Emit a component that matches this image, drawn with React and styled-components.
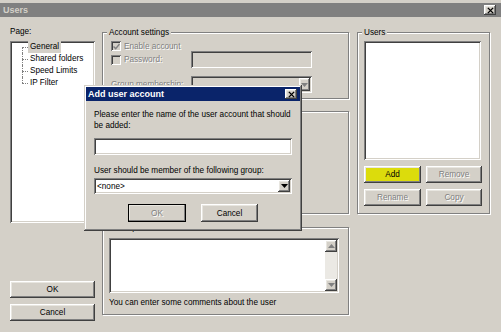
import styled, { createGlobalStyle } from 'styled-components';

const Global = createGlobalStyle`
    html, body {
        margin: 0;
        padding: 0;
        background: #d4d0c8;
    }
`;

const raised = `
    box-shadow: inset -1px -1px 0 #404040, inset 1px 1px 0 #fff, inset -2px -2px 0 #808080, inset 2px 2px 0 #e8e6e0;
`;

const sunken = `
    box-shadow: inset 1px 1px 0 #808080, inset -1px -1px 0 #fff, inset 2px 2px 0 #404040, inset -2px -2px 0 #d4d0c8;
`;

const Window = styled.div`
    width: 501px;
    height: 332px;
    position: relative;
    overflow: hidden;
    background: #d4d0c8;
    font-family: "Liberation Sans", Arial, sans-serif;
    font-size: 8.2px;
    color: #000;
    box-sizing: border-box;
    padding-top: 3px;
`;

const TitleBar = styled.div`
    height: 14px;
    background: ${(p) => (p.active ? '#0a246a' : '#808080')};
    display: flex;
    align-items: center;
    justify-content: space-between;
    padding: ${(p) => (p.active ? '0 3px 0 2px' : '0 5px 0 3px')};
`;

const TitleText = styled.span`
    font-weight: bold;
    font-size: 9px;
    color: ${(p) => (p.active ? '#fff' : '#d4d0c8')};
`;

const CloseBox = styled.div`
    width: 12px;
    height: 10px;
    background: #d4d0c8;
    ${raised}
    display: flex;
    align-items: center;
    justify-content: center;
`;

const Body = styled.div`
    display: flex;
    gap: 7px;
    padding: 10px 11px 11px 10px;
    height: 315px;
    box-sizing: border-box;
`;

const LeftCol = styled.div`
    width: 85px;
    display: flex;
    flex-direction: column;
`;

const MidCol = styled.div`
    width: 247px;
    display: flex;
    flex-direction: column;
`;

const RightCol = styled.div`
    width: 133px;
    margin-left: 1px;
    display: flex;
    flex-direction: column;
`;

const Label = styled.div`
    line-height: 10px;
    height: 10px;
    color: ${(p) => (p.disabled ? '#808080' : '#000')};
    text-shadow: ${(p) => (p.disabled ? '1px 1px 0 #fff' : 'none')};
    white-space: nowrap;
    margin-top: ${(p) => p.mt || 0}px;
`;

const Tree = styled.div`
    margin-top: 4px;
    height: 182px;
    background: #fff;
    ${sunken}
`;

const TreeItem = styled.div`
    position: relative;
    height: 12px;
    line-height: 12px;
    padding-left: 18px;
    &::before {
        content: '';
        position: absolute;
        left: 12px;
        top: 6px;
        width: 6px;
        border-top: 1px dotted #808080;
    }
    &::after {
        content: '';
        position: absolute;
        left: 12px;
        top: ${(p) => (p.first ? '6px' : '0')};
        height: ${(p) => (p.first || p.last ? '6px' : '12px')};
        border-left: 1px dotted #808080;
    }
`;

const TreeText = styled.span`
    display: inline-block;
    padding: 0 2px;
    background: ${(p) => (p.selected ? '#d4d0c8' : 'transparent')};
`;

const Button = styled.div`
    height: ${(p) => p.h || 17}px;
    width: ${(p) => (p.w ? `${p.w}px` : 'auto')};
    box-sizing: border-box;
    display: flex;
    align-items: center;
    justify-content: center;
    background: ${(p) => p.bg || '#d4d0c8'};
    ${raised}
    color: ${(p) => (p.disabled ? '#808080' : '#000')};
    text-shadow: ${(p) => (p.disabled ? '1px 1px 0 #fff' : 'none')};
    outline: ${(p) => (p.isDefault ? '1px solid #000' : 'none')};
    outline-offset: -1px;
    margin-top: ${(p) => p.mt || 0}px;
`;

const Group = styled.div`
    position: relative;
    height: ${(p) => p.h}px;
    margin-top: ${(p) => p.mt || 0}px;
    box-sizing: border-box;
    border: 1px solid #808080;
    box-shadow: inset 1px 1px 0 #fff, 1px 1px 0 #fff;
    padding: ${(p) => p.pad || '0'};
`;

const Legend = styled.span`
    position: absolute;
    top: -6px;
    left: 4px;
    padding: 0 2px;
    line-height: 11px;
    background: #d4d0c8;
`;

const FormRow = styled.div`
    display: flex;
    align-items: center;
    height: ${(p) => p.h}px;
    margin-top: ${(p) => p.mt || 0}px;
`;

const CheckLabel = styled.div`
    width: 80px;
    display: flex;
    align-items: center;
    gap: 3px;
    color: #808080;
    text-shadow: 1px 1px 0 #fff;
    white-space: nowrap;
`;

const CheckBox = styled.div`
    width: 10px;
    height: 10px;
    flex: none;
    background: #d4d0c8;
    ${sunken}
    display: flex;
    align-items: center;
    justify-content: center;
`;

const Field = styled.div`
    width: ${(p) => p.w}px;
    height: ${(p) => p.h}px;
    box-sizing: border-box;
    background: ${(p) => (p.disabled ? '#d4d0c8' : '#fff')};
    ${sunken}
    display: flex;
    align-items: center;
    justify-content: space-between;
    padding: 2px;
    margin-top: ${(p) => p.mt || 0}px;
`;

const FieldText = styled.span`
    padding-left: 1px;
    white-space: nowrap;
`;

const ArrowBtn = styled.div`
    width: ${(p) => p.w || 12}px;
    height: ${(p) => p.h || 12}px;
    flex: none;
    box-sizing: border-box;
    background: #d4d0c8;
    ${raised}
    display: flex;
    align-items: center;
    justify-content: center;
`;

const ListBox = styled.div`
    height: 119px;
    background: #fff;
    ${sunken}
`;

const ButtonGrid = styled.div`
    display: grid;
    grid-template-columns: 57px 56px;
    column-gap: 5px;
    row-gap: 6px;
    margin-top: 6px;
`;

const TextArea = styled.div`
    height: 55px;
    width: 230px;
    box-sizing: border-box;
    background: #fff;
    ${sunken}
    display: flex;
    justify-content: flex-end;
    padding: 2px;
`;

const ScrollTrack = styled.div`
    width: 12px;
    background: #ebe9e4;
    display: flex;
    flex-direction: column;
    justify-content: space-between;
`;

const Dialog = styled.div`
    position: absolute;
    left: 84px;
    top: 85px;
    width: 218px;
    height: 146px;
    box-sizing: border-box;
    padding: 2px;
    background: #d4d0c8;
    box-shadow: inset -1px -1px 0 #404040, inset 1px 1px 0 #d4d0c8, inset -2px -2px 0 #808080, inset 2px 2px 0 #fff;
`;

const DialogBody = styled.div`
    padding: 9px 8px 0 8px;
`;

const Paragraph = styled.div`
    line-height: 10.5px;
`;

const ButtonRow = styled.div`
    display: flex;
    justify-content: center;
    gap: 15px;
    margin-top: 10px;
`;

const XMark = ({ size = 7 }) => (
    <svg width={size} height={size} viewBox="0 0 8 7">
        <path d="M1 0.5 L7 6.5 M7 0.5 L1 6.5" stroke="#000" strokeWidth="1.6" />
    </svg>
);

const Tri = ({ up, color = '#000' }) => (
    <svg width="7" height="4" viewBox="0 0 7 4">
        <path d={up ? 'M0 4 L3.5 0 L7 4 Z' : 'M0 0 L7 0 L3.5 4 Z'} fill={color} />
    </svg>
);

const Check = () => (
    <svg width="7" height="7" viewBox="0 0 7 7">
        <path d="M0.5 3.5 L2.7 5.6 L6.5 1" stroke="#808080" strokeWidth="1.4" fill="none" />
    </svg>
);

export default function App() {
    return (
        <Window>
            <Global />
            <TitleBar>
                <TitleText>Users</TitleText>
                <CloseBox><XMark /></CloseBox>
            </TitleBar>
            <Body>
                <LeftCol>
                    <Label>Page:</Label>
                    <Tree>
                        <TreeItem first><TreeText selected>General</TreeText></TreeItem>
                        <TreeItem><TreeText>Shared folders</TreeText></TreeItem>
                        <TreeItem><TreeText>Speed Limits</TreeText></TreeItem>
                        <TreeItem last><TreeText>IP Filter</TreeText></TreeItem>
                    </Tree>
                    <Button mt={58}>OK</Button>
                    <Button mt={6}>Cancel</Button>
                </LeftCol>

                <MidCol>
                    <Group h={67} mt={5} pad="8px 0 0 8px">
                        <Legend>Account settings</Legend>
                        <FormRow h={10}>
                            <CheckLabel><CheckBox><Check /></CheckBox>Enable account</CheckLabel>
                        </FormRow>
                        <FormRow h={17}>
                            <CheckLabel><CheckBox />Password:</CheckLabel>
                            <Field w={121} h={17} disabled />
                        </FormRow>
                        <FormRow h={17} mt={8}>
                            <CheckLabel>Group membership:</CheckLabel>
                            <Field w={121} h={17} disabled>
                                <span />
                                <ArrowBtn w={11} h={13}><Tri color="#808080" /></ArrowBtn>
                            </Field>
                        </FormRow>
                    </Group>
                    <Group h={103} mt={12} />
                    <Group h={88} mt={13} pad="10px 0 0 6px">
                        <Legend>Description</Legend>
                        <TextArea>
                            <ScrollTrack>
                                <ArrowBtn><Tri up color="#808080" /></ArrowBtn>
                                <ArrowBtn><Tri color="#808080" /></ArrowBtn>
                            </ScrollTrack>
                        </TextArea>
                        <Label mt={5}>You can enter some comments about the user</Label>
                    </Group>
                </MidCol>

                <RightCol>
                    <Group h={182} mt={5} pad="8px 8px 0 6px">
                        <Legend>Users</Legend>
                        <ListBox />
                        <ButtonGrid>
                            <Button bg="#dcdc0c">Add</Button>
                            <Button disabled>Remove</Button>
                            <Button disabled>Rename</Button>
                            <Button disabled>Copy</Button>
                        </ButtonGrid>
                    </Group>
                </RightCol>
            </Body>

            <Dialog>
                <TitleBar active>
                    <TitleText active>Add user account</TitleText>
                    <CloseBox><XMark /></CloseBox>
                </TitleBar>
                <DialogBody>
                    <Paragraph>Please enter the name of the user account that should be added:</Paragraph>
                    <Field w={198} h={17} mt={7} />
                    <Label mt={11}>User should be member of the following group:</Label>
                    <Field w={198} h={16} mt={2}>
                        <FieldText>&lt;none&gt;</FieldText>
                        <ArrowBtn><Tri /></ArrowBtn>
                    </Field>
                    <ButtonRow>
                        <Button w={58} h={18} disabled isDefault>OK</Button>
                        <Button w={57} h={18}>Cancel</Button>
                    </ButtonRow>
                </DialogBody>
            </Dialog>
        </Window>
    );
}
